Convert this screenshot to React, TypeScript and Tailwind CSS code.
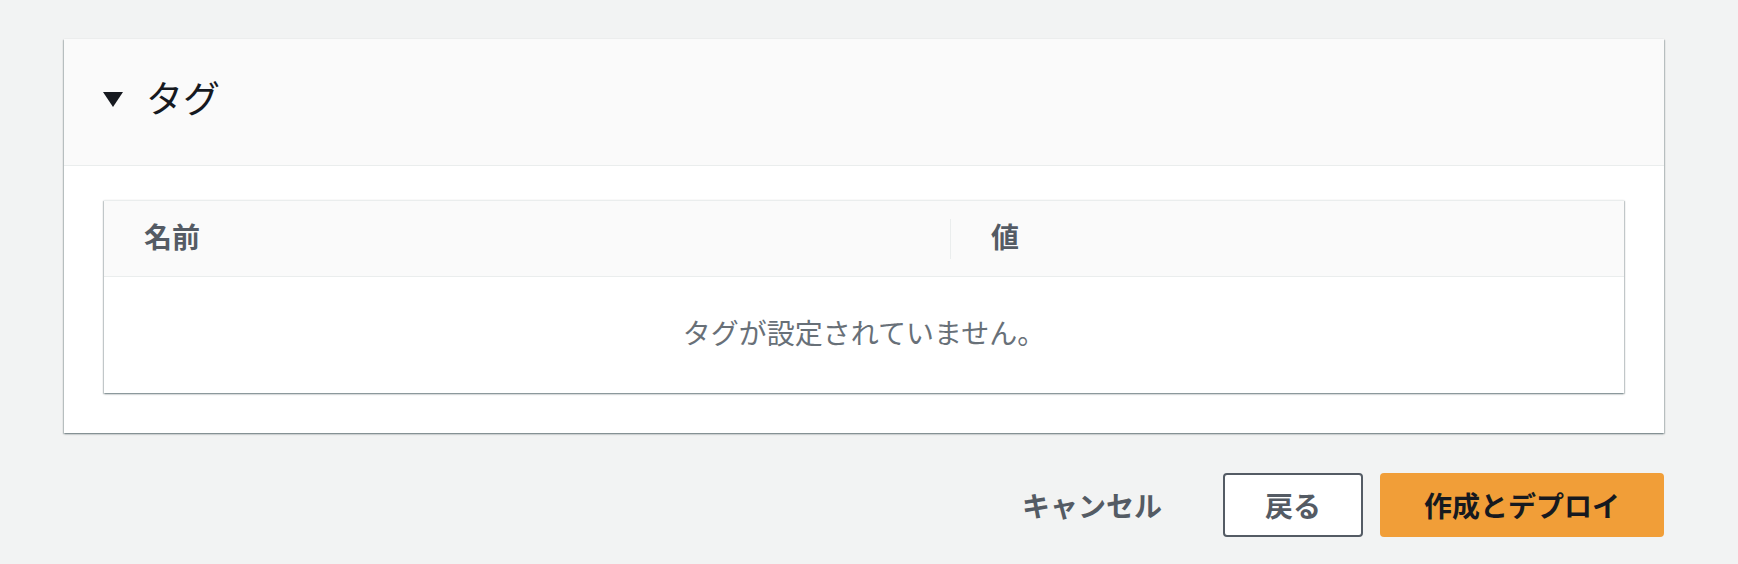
const font = { fontFamily: '"Noto Sans CJK JP", "Noto Sans", sans-serif' }

const cardShadow =
  "shadow-[0_1px_2px_0_rgba(0,28,36,0.35),1px_1px_1px_0_rgba(0,28,36,0.15),-1px_1px_1px_0_rgba(0,28,36,0.15)]"

const TagTable = () => {
  return (
    <div className={`bg-white border-t border-[#eaeded] ${cardShadow}`}>
      <div className="flex h-[76px] items-center bg-[#fafafa] border-b border-[#eaeded] pb-[5px]">
        <div className="flex w-[846px] items-center pl-[40px]">
          <span className="text-[28px] font-bold leading-none text-[#545b64]">名前</span>
        </div>
        <div className="mt-[5px] h-[40px] w-px bg-[#eaeded]" />
        <div className="flex flex-1 items-center pl-[40px]">
          <span className="text-[28px] font-bold leading-none text-[#545b64]">値</span>
        </div>
      </div>
      <div className="flex h-[116px] items-center justify-center pb-[6px]">
        <span className="text-[28px] leading-none text-[#687078]">
          タグが設定されていません。
        </span>
      </div>
    </div>
  )
}

export default function App() {
  return (
    <div
      style={font}
      className="min-h-screen bg-[#f2f3f3] pt-[39px] pl-[64px] pr-[74px]"
    >
      <div className={`bg-white ${cardShadow}`}>
        <div className="flex h-[127px] items-center gap-[23px] bg-[#fafafa] border-b border-[#eaeded] pl-[39px] pb-[10px]">
          <svg width="20" height="15" viewBox="0 0 20 15" className="mt-[4px]">
            <polygon points="0,0 20,0 10,15" fill="#16191f" />
          </svg>
          <h2 className="text-[37px] font-normal leading-none text-[#16191f]">タグ</h2>
        </div>
        <div className="px-[40px] pt-[34px] pb-[40px]">
          <TagTable />
        </div>
      </div>

      <div className="mt-[40px] flex items-center justify-end gap-[17px]">
        <button className="flex h-[64px] items-center px-[44px] text-[28px] font-bold text-[#545b64]">
          キャンセル
        </button>
        <button className="flex h-[64px] items-center rounded-[4px] border-2 border-[#545b64] bg-white px-[40px] text-[28px] font-bold text-[#545b64]">
          戻る
        </button>
        <button className="flex h-[64px] items-center rounded-[4px] bg-[#f19e38] px-[44px] text-[28px] font-bold text-[#16191f]">
          作成とデプロイ
        </button>
      </div>
    </div>
  )
}
